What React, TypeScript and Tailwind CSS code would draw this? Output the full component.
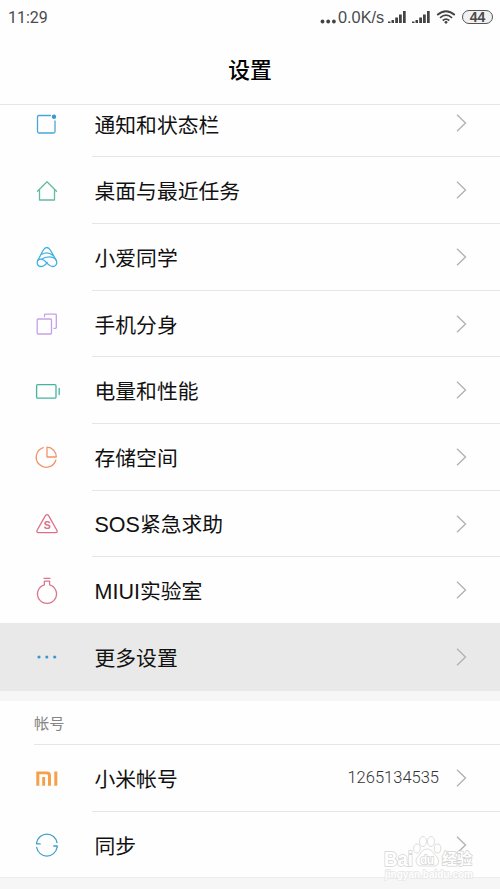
import type { ReactNode } from "react"

const cjk = "font-['Liberation_Sans','Noto_Sans_CJK_SC',sans-serif]"
const digits = "font-['Roboto','Noto_Sans_CJK_SC',sans-serif]"

function Icon({ color, children }: { color: string; children: ReactNode }) {
    return (
        <svg
            width="28"
            height="28"
            viewBox="0 0 28 28"
            fill="none"
            stroke={color}
            strokeWidth="1.3"
            strokeLinecap="round"
            strokeLinejoin="round"
        >
            {children}
        </svg>
    )
}

const icons = {
    notification: (
        <Icon color="#4aa5d6">
            <path d="M17.500 5.500H6q-1.500 0-1.500 1.500v14.500q0 1.500 1.500 1.500h14.500q1.500 0 1.500-1.500V11" />
            <circle cx="21" cy="6.800" r="2.200" fill="#3b98cf" stroke="none" />
        </Icon>
    ),
    home: (
        <Icon color="#62bba4">
            <path d="M4.500 14.200L14 4.800l9.500 9.400M6.500 12.500V23h15V12.500" />
        </Icon>
    ),
    assistant: (
        <Icon color="#3fb0e4">
            <path d="M4.800 17.500L10.300 7q3.500-5 7 0l6 10.500" />
            <path d="M8.800 11.300c4-2.300 8.200-1.400 11.200 1.300" />
            <path d="M14.200 19.300C12 22.500 10.200 23.500 8 23.500a3.700 3.700 0 0 1-3.800-3.800c0-2.200 1.800-3.500 3.800-3.500 4.500 0 6.500 7.300 11.800 7.300a3.900 3.900 0 0 0 4-3.900c0-3-2.800-5.800-7.300-5.800-3.500 0-6 .8-8 2.400" />
        </Icon>
    ),
    clone: (
        <Icon color="#c3a1e8">
            <rect x="4.200" y="9" width="14.300" height="15" rx="1" />
            <path d="M11.500 6.500V5q0-.8.800-.8h10.200q.8 0 .8.800v12.500q0 .8-.8.800H21" />
        </Icon>
    ),
    battery: (
        <Icon color="#44b59b">
            <rect x="3.600" y="7.600" width="19.400" height="13.600" rx="1.200" />
            <path d="M26.200 11.500v6" />
        </Icon>
    ),
    storage: (
        <Icon color="#f19468">
            <path d="M10.300 4.700A10 10 0 1 0 22.800 17.200" />
            <path d="M14 4.200v9.800h9.300A9.600 9.600 0 0 0 14 4.200z" />
        </Icon>
    ),
    sos: (
        <Icon color="#dc7086">
            <path d="M12.400 5.600Q14 3.600 15.600 5.600L24 20.500q.8 2.200-1.500 2.200h-17Q3.400 22.700 4 20.500z" />
            <text
                x="14.200"
                y="19.200"
                textAnchor="middle"
                fill="#dc7086"
                stroke="none"
                fontFamily="Liberation Sans, sans-serif"
                fontSize="10.500"
                fontWeight="700"
            >
                S
            </text>
        </Icon>
    ),
    lab: (
        <Icon color="#d9758d">
            <path d="M11 1.300h6M11.400 4.200h5.200M11.400 4.200v3.600a9.500 9.500 0 1 0 5.200 0V4.200" />
        </Icon>
    ),
    more: (
        <Icon color="none">
            <g fill="#3b98cf">
                <circle cx="6" cy="14" r="1.600" />
                <circle cx="13.800" cy="14" r="1.600" />
                <circle cx="21.700" cy="14" r="1.600" />
            </g>
        </Icon>
    ),
    mi: (
        <svg width="28" height="28" viewBox="0 0 28 28" fill="#f6a04a">
            <path d="M3.300 7.500H14q4 0 4 4v10.300h-3v-10q0-1.600-1.600-1.600H6.300v11.600h-3zM9.200 13h2.900v8.800H9.200zM21.300 7.500h3v14.300h-3z" />
        </svg>
    ),
    sync: (
        <Icon color="#3f9fcc">
            <path d="M3.700 11.500A10.300 10.300 0 0 1 24 11.700M3.700 11.500v1.400h3.500M24 16.500A10.300 10.300 0 0 1 3.700 16.500M24.200 16.500V15h-3.500" />
        </Icon>
    ),
}

const general = [
    { icon: icons.notification, label: "通知和状态栏" },
    { icon: icons.home, label: "桌面与最近任务" },
    { icon: icons.assistant, label: "小爱同学" },
    { icon: icons.clone, label: "手机分身" },
    { icon: icons.battery, label: "电量和性能" },
    { icon: icons.storage, label: "存储空间" },
    { icon: icons.sos, latin: "SOS", label: "紧急求助" },
    { icon: icons.lab, latin: "MIUI", label: "实验室" },
    { icon: icons.more, label: "更多设置", active: true },
]

const account = [
    { icon: icons.mi, label: "小米帐号", value: "1265134535" },
    { icon: icons.sync, label: "同步" },
]

type RowProps = {
    icon: ReactNode
    label: string
    latin?: string
    value?: string
    active?: boolean
    last?: boolean
}

function Row({ icon, label, latin, value, active, last }: RowProps) {
    return (
        <li className={`flex shrink-0 ${active ? "-mt-px h-[67.700px] bg-[#e9e9e9] pt-px" : "h-[66.700px]"}`}>
            <div className="flex w-[92px] shrink-0 items-center pl-[33px]">{icon}</div>
            <div
                className={`flex flex-1 items-center border-b pr-[33px] pl-[2.500px] ${last || active ? "border-transparent" : "border-[#e6e6e6]"}`}
            >
                <span className="flex-1 pt-[5px] text-[20.800px] leading-none text-[#111]">
                    {latin && <span className="text-[21.500px] leading-none">{latin}</span>}
                    {label}
                </span>
                {value && (
                    <span className={`mr-[17px] pt-[2px] text-[16.500px] font-light text-[#333] ${digits}`}>{value}</span>
                )}
                <svg width="11" height="18" viewBox="0 0 11 18" fill="none" stroke="#b3b3b3" strokeWidth="1.400">
                    <path d="M1 .8L9.500 9 1 17.200" />
                </svg>
            </div>
        </li>
    )
}

function Signal() {
    return (
        <svg width="18" height="14" viewBox="0 0 18 14" fill="#444">
            <path d="M0 10.500h2.500V12H0zM3.500 9H6v3H3.500zM7.200 6.500H10V12H7.200zM11 3.500h2.800V12H11zM15 0h2.700v12H15z" />
        </svg>
    )
}

function StatusBar() {
    return (
        <div className={`flex h-[35px] items-center pr-[7px] pl-2 text-[#4a4a4a] ${digits}`}>
            <span className="flex-1 text-[16px]">11:29</span>
            <svg width="18" height="14" viewBox="0 0 18 14" fill="#444">
                <circle cx="2.500" cy="10.500" r="1.900" />
                <circle cx="8.200" cy="10.500" r="1.900" />
                <circle cx="13.900" cy="10.500" r="1.900" />
            </svg>
            <span className="w-[50px] font-['Liberation_Sans',sans-serif] text-[16.300px]">0.0K/s</span>
            <Signal />
            <span className="w-[6px]" />
            <Signal />
            <svg className="ml-[6px]" width="20" height="16" viewBox="0 0 20 16" fill="none" stroke="#444" strokeWidth="1.700">
                <path d="M1.200 5Q10-2.500 18.800 5M4 7.800Q10 2.600 16 7.800M6.700 10.500Q10 7.700 13.300 10.500" />
                <circle cx="10" cy="12.300" r="1.400" fill="#444" stroke="none" />
            </svg>
            <span className="mb-[2px] ml-[6px] flex h-[14px] w-[31px] items-center justify-center rounded-full border-[1.500px] border-[#555] bg-[#f1f1f1] font-['Liberation_Sans',sans-serif] text-[14px] leading-none font-bold">
                44
            </span>
        </div>
    )
}

function Watermark() {
    return (
        <svg className="absolute right-[25px] bottom-[7px]" width="92" height="54" viewBox="0 0 92 54">
            <g fill="#fff" fillOpacity=".6" stroke="#dcdcdc" strokeWidth="1">
                <ellipse cx="34" cy="20.500" rx="3.300" ry="4.500" />
                <ellipse cx="40" cy="13.500" rx="3.500" ry="5" />
                <ellipse cx="48" cy="13.500" rx="3.500" ry="5" />
                <ellipse cx="54.500" cy="20.500" rx="3.300" ry="4.500" />
                <path d="M44 21c-4.500 0-6 4.500-9 7.500-3.500 3.500-2 9.500 3 9.500h13c5 0 6-6 2.500-9.500-3-3-5-7.500-9.500-7.500z" />
            </g>
            <g fill="#fff" stroke="#d4d4d4" strokeWidth="1.500" paintOrder="stroke" fontWeight="700">
                <text
                    x="1"
                    y="37.500"
                    fontSize="20"
                    textLength="29"
                    lengthAdjust="spacingAndGlyphs"
                    fontFamily="Liberation Sans, sans-serif"
                >
                    Bai
                </text>
                <text x="37" y="35.500" fontSize="12" textLength="14" fontFamily="Liberation Sans, sans-serif">
                    du
                </text>
                <text x="59" y="36" fontSize="15" textLength="30" fontFamily="Noto Sans CJK SC, sans-serif">
                    经验
                </text>
                <text
                    x="2"
                    y="49.500"
                    fontSize="10"
                    stroke="#e6e6e6"
                    textLength="88"
                    lengthAdjust="spacingAndGlyphs"
                    fontFamily="Liberation Sans, sans-serif"
                >
                    jingyan.baidu.com
                </text>
            </g>
        </svg>
    )
}

export default function App() {
    return (
        <main className={`relative flex h-[889px] w-[500px] flex-col overflow-hidden bg-[#fefefe] ${cjk}`}>
            <header className="h-[105px] shrink-0 border-b border-[#e6e6e6]">
                <StatusBar />
                <h1 className="flex h-[69px] items-center justify-center pt-[4px] text-[21.800px] font-medium text-black">
                    设置
                </h1>
            </header>

            {/* the list is scrolled, so the first row starts under the header */}
            <ul className="flex h-[585.800px] shrink-0 flex-col justify-end overflow-hidden">
                {general.map((item, i) => (
                    <Row key={item.label} {...item} last={i === general.length - 1} />
                ))}
            </ul>

            <div className="h-[10.200px] shrink-0 bg-[#f6f6f6]" />

            <section className="h-[176px] shrink-0">
                <h2 className="ml-[34px] flex h-[44px] items-center border-b border-[#e6e6e6] pt-[3px] text-[15.200px] text-[#858585]">
                    帐号
                </h2>
                <ul>
                    {account.map((item, i) => (
                        <Row key={item.label} {...item} last={i === account.length - 1} />
                    ))}
                </ul>
            </section>

            <div className="flex-1 border-t border-[#ececec] bg-[#f6f6f6]" />
            <Watermark />
        </main>
    )
}
